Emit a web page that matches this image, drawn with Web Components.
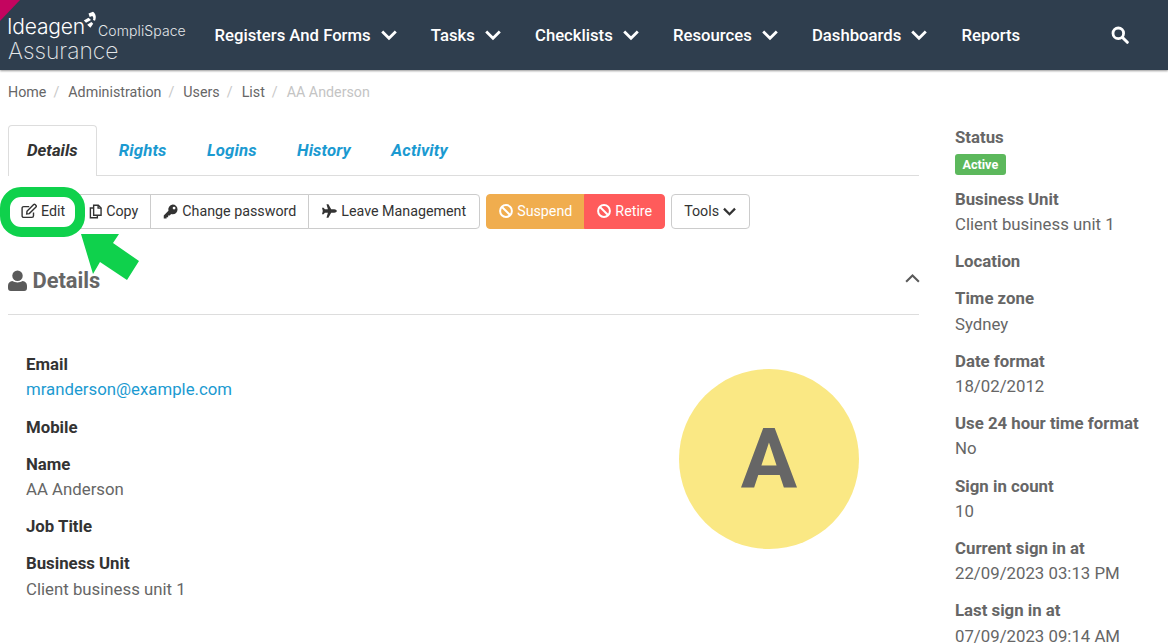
<!DOCTYPE html>
<html>
<head>
<meta charset="utf-8">
<title>AA Anderson</title>
<style>
  html, body { margin: 0; padding: 0; height: 644px; overflow: hidden; background: #fff; }
  body { font-family: Roboto, "Liberation Sans", sans-serif; font-size: 16.8px; color: #666; }
</style>
</head>
<body>
<app-page></app-page>

<script>
const ICONS = {
  chevron: '<svg viewBox="0 0 16 16" width="1em" height="1em"><path d="M1.2 4.500L8 11.300l6.800-6.800" fill="none" stroke="currentColor" stroke-width="2.800"/></svg>',
  search: '<svg viewBox="0 0 18 18" width="18" height="18"><circle cx="7.300" cy="7.300" r="5.300" fill="none" stroke="currentColor" stroke-width="2.800"/><path d="M11.500 11.500l4.800 4.800" stroke="currentColor" stroke-width="3" stroke-linecap="round"/></svg>',
  edit: '<svg viewBox="0 0 16 16" width="16" height="16" fill="none" stroke="currentColor" stroke-width="1.400"><path d="M12.500 9.500v3.300a1.600 1.600 0 0 1-1.600 1.600H2.700a1.600 1.600 0 0 1-1.600-1.600V5.200a1.600 1.600 0 0 1 1.600-1.600h5.500"/><path d="M6 8.300l6.700-6.700a1 1 0 0 1 1.400 0l.9.900a1 1 0 0 1 0 1.400L8.300 10.600 5.700 11z"/></svg>',
  copy: '<svg viewBox="0 0 14 16" width="13" height="15" fill="none" stroke="currentColor" stroke-width="1.500"><path d="M5 1.200h5l3 3V12H5z"/><path d="M5 4.200H1.500v10.600H9V12"/><path d="M9.800 1.200v3.200H13"/></svg>',
  key: '<svg viewBox="0 0 16 16" width="15" height="15"><path fill="currentColor" fill-rule="evenodd" d="M10.300.6a5.200 5.200 0 0 1 0 10.400c-.6 0-1.100-.1-1.600-.3L7.200 12.300H5.500V14H3.800v1.400H.8v-3.200l5-5A5.200 5.200 0 0 1 10.300.6zm1.500 2.200a1.500 1.500 0 1 0 0 3 1.500 1.500 0 0 0 0-3z"/></svg>',
  plane: '<svg viewBox="0 0 16 16" width="16" height="16"><path fill="currentColor" d="M15.800 8c0 1-1.400 1.700-2.500 1.700H10.200L7.400 14.700H5.500L6.900 9.700H3.900L2.600 11.300H1L1.800 8 1 4.700h1.600l1.300 1.600h3L5.500 1.300h1.900l2.800 5h3.100c1.100 0 2.500.7 2.500 1.700z"/></svg>',
  ban: '<svg viewBox="0 0 14 14" width="14" height="14" fill="none" stroke="currentColor" stroke-width="2"><circle cx="7" cy="7" r="5.900"/><path d="M3 3l8 8"/></svg>',
  user: '<svg viewBox="0 0 20 22" width="19" height="21"><circle cx="10" cy="6" r="5.500" fill="currentColor"/><path fill="currentColor" d="M4.500 11.500c1.500 1 3.500 1.500 5.500 1.500s4-.5 5.500-1.500c2.500.3 4.500 2 4.500 5V19a3 3 0 0 1-3 3H3a3 3 0 0 1-3-3v-2.500c0-3 2-4.700 4.500-5z"/></svg>'
};

class AppNav extends HTMLElement {
  constructor() {
    super();
    this.attachShadow({ mode: 'open' }).innerHTML = `
      <style>
        :host { display: flex; align-items: center; height: 70px; background: #2f3e4e; color: #fff;
          box-shadow: 0 1px 2px rgba(0,0,0,.4); position: relative; }
        .corner { position: absolute; left: 0; top: 0; width: 0; height: 0;
          border-top: 21px solid #c4055f; border-right: 20px solid transparent; }
        .logo { width: 207px; flex: none; height: 70px; position: relative; font-family: Inter, sans-serif; font-weight: 300; }
        .logo span { position: absolute; white-space: nowrap; line-height: 1; }
        .ideagen { left: 7px; top: 16px; font-size: 21px; letter-spacing: -.2px; line-height: 22px; }
        .compli { left: 98px; top: 24px; font-size: 14px; letter-spacing: .1px; color: #e4e7ea; }
        .assure { left: 8px; top: 40px; font-size: 22.800px; font-weight: 200; color: #e4e7ea; }
        .logo svg { position: absolute; left: 83px; top: 11px; }
        nav { display: flex; flex: 1; align-items: center; gap: 34.200px; padding-left: 7.500px; font-size: 16.700px; font-weight: 500; }
        nav span { display: inline-flex; align-items: center; gap: 10px; white-space: nowrap; }
        nav svg { font-size: 16px; }
        .search { display: flex; margin-right: 39px; }
      </style>
      <div class="corner"></div>
      <div class="logo">
        <span class="ideagen">Ideagen</span>
        <svg width="15" height="18" viewBox="0 0 15 18" fill="#fff"><path d="M5.500 2.500L10 .8c2.800 2 3.600 5.400 2 9l-2-.7c.6-1.600.3-3-.8-4l-2.500 1z"/><path d="M.8 9.500L5.500 6.800l2.500 2.200-5 2.800z"/><path d="M4.200 13.800l4.200-2.800 1.800 1.700-2.800 4.100z"/></svg>
        <span class="compli">CompliSpace</span>
        <span class="assure">Assurance</span>
      </div>
      <nav>
        <span>Registers And Forms ${ICONS.chevron}</span>
        <span>Tasks ${ICONS.chevron}</span>
        <span>Checklists ${ICONS.chevron}</span>
        <span>Resources ${ICONS.chevron}</span>
        <span>Dashboards ${ICONS.chevron}</span>
        <span>Reports</span>
      </nav>
      <div class="search">${ICONS.search}</div>`;
  }
}
customElements.define('app-nav', AppNav);

class AppBreadcrumb extends HTMLElement {
  constructor() {
    super();
    this.attachShadow({ mode: 'open' }).innerHTML = `
      <style>
        :host { display: flex; padding: 12px 0 0 8px; height: 24px; line-height: 21px; font-size: 14.280px; color: #666; }
        i { font-style: normal; color: #c8c8c8; padding: 0 9px 0 7px; }
        .last { color: #c4c4c4; }
      </style>
      <span>Home</span><i>/</i><span>Administration</span><i>/</i><span>Users</span><i>/</i><span>List</span><i>/</i><span class="last">AA Anderson</span>`;
  }
}
customElements.define('app-breadcrumb', AppBreadcrumb);

class AppTabs extends HTMLElement {
  constructor() {
    super();
    this.attachShadow({ mode: 'open' }).innerHTML = `
      <style>
        :host { display: flex; height: 50px; border-bottom: 1px solid #ddd; font-style: italic; font-weight: 700; font-size: 16.800px; }
        span { padding: 0 20.200px; line-height: 50px; color: #1b9ad1; letter-spacing: .12px; }
        .active { color: #333; background: #fff; border: 1px solid #ddd; border-bottom: 0; border-radius: 4px 4px 0 0;
          height: 51px; box-sizing: border-box; padding: 0 18px; margin-right: 2px; line-height: 48px; letter-spacing: 0; }
      </style>
      <span class="active">Details</span><span>Rights</span><span>Logins</span><span>History</span><span>Activity</span>`;
  }
}
customElements.define('app-tabs', AppTabs);

class ToolButton extends HTMLElement {
  constructor() {
    super();
    this.attachShadow({ mode: 'open' }).innerHTML = `
      <style>
        :host { display: inline-flex; align-items: center; justify-content: center; gap: var(--gap, 4px); box-sizing: border-box; height: 35px; padding: 0 12px 1px;
          font-size: 14.280px; color: #333; background: #fff; border: 1px solid #ccc; margin-left: -1px; white-space: nowrap; }
        :host([first]) { border-radius: 4px 0 0 4px; margin-left: 0; padding-right: 11px; }
        :host([last]) { border-radius: 0 4px 4px 0; padding-right: 13px; }
        :host([solo]) { border-radius: 4px; margin-left: 0; padding-right: 13px; }
        :host([tone=warn]) { background: #f0ad4e; border-color: #f0ad4e; color: #fff; border-radius: 4px 0 0 4px; margin-left: 0; }
        :host([tone=danger]) { background: #ff5b5b; border-color: #ff5b5b; color: #fff; border-radius: 0 4px 4px 0; }
        ::slotted(svg) { display: block; flex: none; }
      </style>
      <slot></slot>`;
  }
}
customElements.define('tool-button', ToolButton);

class AppToolbar extends HTMLElement {
  constructor() {
    super();
    this.attachShadow({ mode: 'open' }).innerHTML = `
      <style>
        :host { display: flex; gap: 6px; margin-top: 18px; position: relative; }
        .group { display: flex; }
        .ring { position: absolute; left: -8px; top: -7px; width: 85px; height: 50px; box-sizing: border-box;
          border: 10px solid #0fd14c; border-radius: 21px; }
        .arrow { position: absolute; left: 72px; top: 39px; }
      </style>
      <div class="group">
        <tool-button first>${ICONS.edit}<span>Edit</span></tool-button>
        <tool-button>${ICONS.copy}<span>Copy</span></tool-button>
        <tool-button>${ICONS.key}<span>Change password</span></tool-button>
        <tool-button last>${ICONS.plane}<span>Leave Management</span></tool-button>
      </div>
      <div class="group">
        <tool-button tone="warn">${ICONS.ban}<span>Suspend</span></tool-button>
        <tool-button tone="danger">${ICONS.ban}<span>Retire</span></tool-button>
      </div>
      <tool-button solo style="--gap:4px"><span>Tools</span><span style="font-size:13px;display:flex">${ICONS.chevron}</span></tool-button>
      <div class="ring"></div>
      <svg class="arrow" width="60" height="48" viewBox="0 0 60 48"><path fill="#0fd14c" d="M1 1h38l-6 9 26 18-12 19-27-18-7 12z"/></svg>`;
  }
}
customElements.define('app-toolbar', AppToolbar);

class InfoField extends HTMLElement {
  constructor() {
    super();
    this.attachShadow({ mode: 'open' }).innerHTML = `
      <style>
        :host { display: block; margin-bottom: 12px; line-height: 25.200px; }
        .label { font-weight: 700; color: var(--label-color, #333); }
      </style>
      <div class="label"></div>
      <slot></slot>`;
    this.shadowRoot.querySelector('.label').textContent = this.getAttribute('label');
  }
}
customElements.define('info-field', InfoField);

class UserAvatar extends HTMLElement {
  constructor() {
    super();
    this.attachShadow({ mode: 'open' }).innerHTML = `
      <style>
        :host { display: flex; align-items: center; justify-content: center; width: 180px; height: 180px; border-radius: 50%;
          background: #fae884; color: #666; font-size: 84px; font-weight: 700; flex: none; }
      </style>
      <slot></slot>`;
  }
}
customElements.define('user-avatar', UserAvatar);

class UserDetails extends HTMLElement {
  constructor() {
    super();
    this.attachShadow({ mode: 'open' }).innerHTML = `
      <style>
        :host { display: block; margin-top: 31px; }
        header { display: flex; align-items: center; height: 40px; padding-bottom: 14px; border-bottom: 1px solid #ddd; color: #5a5a5a; }
        h2 { display: flex; align-items: center; gap: 5.500px; flex: 1; margin: 0; font-size: 21.840px; font-weight: 700; color: #666; }
        h2 svg { color: #5a5a5a; }
        .toggle { transform: rotate(180deg); display: flex; font-size: 15px; margin: 0 -1px 4px 0; }
        .toggle path { stroke-width: 2.200; }
        .body { display: flex; padding: 37.250px 60px 0 18px; justify-content: space-between; align-items: flex-start; }
        user-avatar { margin-top: 16.750px; }
        a { color: #1b9ad1; text-decoration: none; }
      </style>
      <header>
        <h2>${ICONS.user}<span>Details</span></h2>
        <span class="toggle">${ICONS.chevron}</span>
      </header>
      <div class="body">
        <div>
          <info-field label="Email"><a>mranderson@example.com</a></info-field>
          <info-field label="Mobile"></info-field>
          <info-field label="Name">AA Anderson</info-field>
          <info-field label="Job Title"></info-field>
          <info-field label="Business Unit">Client business unit 1</info-field>
        </div>
        <user-avatar>A</user-avatar>
      </div>`;
  }
}
customElements.define('user-details', UserDetails);

class SidePanel extends HTMLElement {
  constructor() {
    super();
    this.attachShadow({ mode: 'open' }).innerHTML = `
      <style>
        :host { display: block; padding-top: 55px; --label-color: #666; }
        .badge { display: block; width: fit-content; margin: 3.500px 0 .550px; padding: 0 7.500px; height: 21px; line-height: 21px; border-radius: 3px;
          background: #5cb85c; color: #fff; font-size: 12.600px; font-weight: 700; }
      </style>
      <info-field label="Status"><span class="badge">Active</span></info-field>
      <info-field label="Business Unit">Client business unit 1</info-field>
      <info-field label="Location"></info-field>
      <info-field label="Time zone">Sydney</info-field>
      <info-field label="Date format">18/02/2012</info-field>
      <info-field label="Use 24 hour time format">No</info-field>
      <info-field label="Sign in count">10</info-field>
      <info-field label="Current sign in at">22/09/2023 03:13 PM</info-field>
      <info-field label="Last sign in at">07/09/2023 09:14 AM</info-field>`;
  }
}
customElements.define('side-panel', SidePanel);

class AppPage extends HTMLElement {
  constructor() {
    super();
    this.attachShadow({ mode: 'open' }).innerHTML = `
      <style>
        :host { display: block; height: 644px; overflow: hidden; }
        .content { display: grid; grid-template-columns: 911px 1fr; column-gap: 36px; padding-left: 8px; }
        main { padding-top: 19px; }
      </style>
      <app-nav></app-nav>
      <div class="content">
        <div>
          <div style="margin-left:-8px"><app-breadcrumb></app-breadcrumb></div>
          <main>
            <app-tabs></app-tabs>
            <app-toolbar></app-toolbar>
            <user-details></user-details>
          </main>
        </div>
        <side-panel></side-panel>
      </div>`;
  }
}
customElements.define('app-page', AppPage);
</script>
</body>
</html>
